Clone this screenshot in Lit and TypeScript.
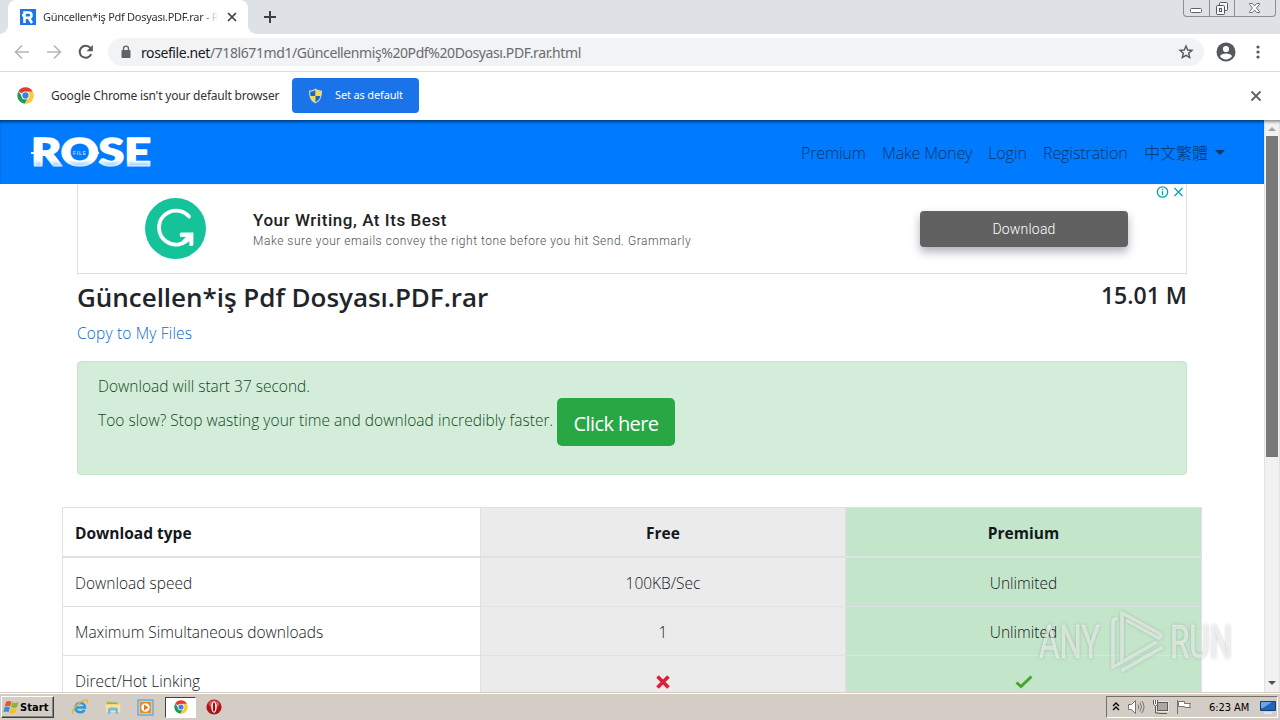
import { LitElement, html, css, svg } from "lit";
import { customElement, property } from "lit/decorators.js";
import { classMap } from "lit/directives/class-map.js";

const chromeLogo = svg`
  <circle cx="24" cy="24" r="22" fill="#fff" />
  <path d="M24 24 4.9 13A22 22 0 0 1 43.1 13z" fill="#e33b2e" />
  <path d="M4.9 13A22 22 0 0 0 22 46l8-13-6-9-9 2z" fill="#219b55" />
  <path d="M43.1 13A22 22 0 0 1 22 46l11-18-5-15z" fill="#fcc934" />
  <circle cx="24" cy="24" r="11" fill="#fff" />
  <circle cx="24" cy="24" r="8.5" fill="#3f7ee8" />
`;

@customElement("browser-top")
class BrowserTop extends LitElement {
  static styles = css`
    :host {
      display: block;
      font-family: "Noto Sans", "DejaVu Sans", sans-serif;
      color: #303236;
      background: #fff;
    }
    svg {
      display: block;
      flex: none;
    }
    .strip {
      display: flex;
      height: 34px;
      background: #dee1e6;
      padding-left: 8px;
      box-sizing: border-box;
    }
    .tab {
      position: relative;
      display: flex;
      align-items: center;
      width: 240px;
      height: 34px;
      padding: 0 11px 0 12px;
      box-sizing: border-box;
      background: #fff;
      border-radius: 8px 8px 0 0;
    }
    .tab::before,
    .tab::after {
      content: "";
      position: absolute;
      bottom: 0;
      width: 8px;
      height: 8px;
    }
    .tab::before {
      left: -8px;
      background: radial-gradient(circle at 0 0, transparent 7.5px, #fff 8px);
    }
    .tab::after {
      right: -8px;
      background: radial-gradient(circle at 100% 0, transparent 7.5px, #fff 8px);
    }
    .title {
      width: 175px;
      margin: 0 9px 1px 7px;
      overflow: hidden;
      white-space: nowrap;
      font-size: 11px;
      letter-spacing: -0.28px;
      mask-image: linear-gradient(90deg, #000 90%, transparent);
    }
    .plus {
      margin: 10px 0 0 15px;
    }
    .controls {
      display: flex;
      margin-left: auto;
      margin-right: 4px;
      height: 16px;
      border: 1px solid #8b8e96;
      border-top: 0;
      border-radius: 0 0 4px 4px;
    }
    .controls svg + svg {
      border-left: 1px solid #8b8e96;
    }
    .toolbar {
      display: flex;
      align-items: center;
      height: 37px;
      box-sizing: border-box;
      padding: 0 13px 1px 14px;
    }
    .toolbar > svg {
      margin-right: 16px;
    }
    .toolbar > .reload {
      margin-right: 14px;
    }
    .address {
      display: flex;
      flex: 1;
      align-items: center;
      height: 28px;
      padding: 0 10px 0 12px;
      border-radius: 14px;
      background: #f1f3f4;
      font-size: 14px;
      color: #696c70;
    }
    .address b {
      font-weight: 400;
      color: #17181a;
    }
    .url {
      flex: 1;
      margin-left: 9px;
      letter-spacing: -0.41px;
      white-space: nowrap;
    }
    .toolbar > .user {
      margin: 0 13px 0 12px;
    }
    .toolbar > .dots {
      margin: 0;
    }
    .infobar {
      display: flex;
      align-items: center;
      height: 49px;
      box-sizing: border-box;
      padding: 0 17px 1px;
      border-top: 1px solid #dadce0;
      font-size: 12px;
    }
    .message {
      margin: 0 13px 0 17px;
      width: 228px;
      white-space: nowrap;
      letter-spacing: -0.19px;
    }
    .set {
      display: flex;
      align-items: center;
      width: 127px;
      height: 35px;
      box-sizing: border-box;
      padding-left: 16px;
      gap: 12px;
      border-radius: 4px;
      background: #1a73e8;
      color: #fff;
      font-size: 11px;
      letter-spacing: -0.15px;
      white-space: nowrap;
    }
    .set span {
      margin-bottom: 2px;
    }
    .close {
      margin-left: auto;
    }
  `;

  render() {
    return html`
      <div class="strip">
        <div class="tab">
          <svg width="16" height="16" viewBox="0 0 16 16">
            <path d="M0 0h16v16H0z" fill="#1a76ee" />
            <path
              d="M4.5 14V3.5h4.3a2.6 2.6 0 0 1 0 5.3H5.5M8.8 9l3.2 5M2 6.2h3"
              fill="none"
              stroke="#fff"
              stroke-width="2.6"
            />
          </svg>
          <div class="title">Güncellen*iş Pdf Dosyası.PDF.rar - R</div>
          <svg width="10" height="10" viewBox="0 0 10 10">
            <path d="M1 1l8 8M9 1L1 9" stroke="#3c4043" stroke-width="1.7" />
          </svg>
        </div>
        <svg class="plus" width="14" height="14" viewBox="0 0 14 14">
          <path d="M7 1v12M1 7h12" stroke="#3c4043" stroke-width="2" />
        </svg>
        <div class="controls">
          <svg width="25" height="16" viewBox="0 0 25 16">
            <rect x="6.5" y="8.5" width="11" height="4" rx="1" fill="#fff" stroke="#5f6269" />
          </svg>
          <svg width="24" height="16" viewBox="0 0 24 16" fill="#f5f6f8" stroke="#555861">
            <rect x="9.5" y="2.5" width="8" height="8" rx="1" />
            <rect x="6.5" y="5.5" width="8" height="9" rx="1" />
            <rect x="9.5" y="8.5" width="2" height="3" />
          </svg>
          <svg width="40" height="16" viewBox="0 0 40 16">
            <path
              d="M14.5 3.5h3l2 2.500 2-2.500h3v1l-3 3.500 3 3.500v1h-3l-2-2.500-2 2.500h-3v-1l3-3.500-3-3.500z"
              fill="#fff"
              stroke="#6a6d74"
            />
          </svg>
        </div>
      </div>

      <div class="toolbar">
        <svg width="16" height="16" viewBox="0 0 16 16" fill="none" stroke="#b5b7ba" stroke-width="1.7">
          <path d="M15 8H2M8 1.500L1.500 8 8 14.500" />
        </svg>
        <svg width="16" height="16" viewBox="0 0 16 16" fill="none" stroke="#b5b7ba" stroke-width="1.7">
          <path d="M1 8h13M8 1.500L14.500 8 8 14.500" />
        </svg>
        <svg class="reload" width="16" height="16" viewBox="0 0 16 16">
          <path d="M13.2 10.200A6 6 0 1 1 12.400 4" fill="none" stroke="#55585c" stroke-width="2" />
          <path d="M14.8 1v6.200H8.600z" fill="#55585c" />
        </svg>
        <div class="address">
          <svg width="12" height="14" viewBox="0 0 12 14">
            <rect x="1.5" y="5" width="9" height="8" rx="1" fill="#5f6368" />
            <path d="M3.5 6V3.700a2.500 2.500 0 0 1 5 0V6" fill="none" stroke="#5f6368" stroke-width="1.3" />
          </svg>
          <div class="url"><b>rosefile.net</b>/718l671md1/Güncellenmiş%20Pdf%20Dosyası.PDF.rar.html</div>
          <svg width="16" height="16" viewBox="0 0 16 16">
            <path
              d="M8 2l1.700 4 4.300.4-3.300 2.900 1 4.200L8 11.300l-3.700 2.200 1-4.200L2 6.400 6.300 6z"
              fill="none"
              stroke="#55585c"
              stroke-width="1.4"
            />
          </svg>
        </div>
        <svg class="user" width="20" height="20" viewBox="0 0 20 20">
          <circle cx="10" cy="10" r="9.5" fill="#55585c" />
          <circle cx="10" cy="7" r="3.1" fill="#fff" />
          <path d="M4 14.300c1.200-3.600 10.800-3.600 12 0a7.300 7.300 0 0 1-12 0z" fill="#fff" />
        </svg>
        <svg class="dots" width="18" height="16" viewBox="0 0 18 16" fill="#55585c">
          <circle cx="9" cy="3" r="1.6" />
          <circle cx="9" cy="8" r="1.6" />
          <circle cx="9" cy="13" r="1.6" />
        </svg>
      </div>

      <div class="infobar">
        <svg width="17" height="17" viewBox="1 1 46 46">${chromeLogo}</svg>
        <div class="message">Google Chrome isn't your default browser</div>
        <div class="set">
          <svg width="15" height="16" viewBox="0 0 15 16">
            <path d="M7.5.5C5.500 2 3.300 2.600 1 2.600 1 8.500 2 13 7.500 15.500 13 13 14 8.500 14 2.600 11.700 2.600 9.500 2 7.500.5z" fill="#d3d5ca" />
            <path d="M7.5 2C6 3 4.200 3.600 2.200 3.800q0 2.300.4 4.200h4.900z" fill="#1767c5" />
            <path d="M7.5 2c1.500 1 3.300 1.600 5.300 1.800q0 2.300-.4 4.200H7.500z" fill="#fbdc35" />
            <path d="M2.6 8h4.900v6.200C4.600 12.700 3.200 10.700 2.600 8z" fill="#fbdc35" />
            <path d="M12.4 8H7.500v6.200c2.900-1.500 4.300-3.500 4.900-6.200z" fill="#1767c5" />
          </svg>
          <span>Set as default</span>
        </div>
        <svg class="close" width="14" height="14" viewBox="0 0 14 14">
          <path d="M2.5 2.500l9 9M11.500 2.500l-9 9" stroke="#5f6368" stroke-width="1.9" />
        </svg>
      </div>
    `;
  }
}

@customElement("rose-nav")
class RoseNav extends LitElement {
  static styles = css`
    :host {
      display: flex;
      align-items: center;
      height: 64px;
      padding: 1px 39px 0 30px;
      box-sizing: border-box;
      background: #007bff;
      box-shadow: inset 0 3px 3px -1px rgba(0, 0, 0, 0.5);
      font-family: "Open Sans", "Noto Sans CJK TC", sans-serif;
    }
    svg {
      display: block;
    }
    nav {
      display: flex;
      align-items: center;
      gap: 16px;
      margin-left: auto;
      font-size: 16px;
      font-weight: 300;
      line-height: 24px;
      color: #043468;
      white-space: nowrap;
    }
    .premium {
      width: 65px;
      letter-spacing: -0.15px;
    }
    .money {
      width: 90px;
      letter-spacing: -0.15px;
    }
    .login {
      width: 39px;
    }
    .registration {
      width: 85px;
      letter-spacing: -0.08px;
    }
    .lang {
      display: flex;
      align-items: center;
      gap: 7px;
    }
    .caret {
      border: 5px solid transparent;
      border-top-color: #043468;
      border-bottom: 0;
    }
  `;

  render() {
    return html`
      <svg width="124" height="34" viewBox="0 0 124 34">
        <defs>
          <linearGradient id="fade" x1="0" y1="0" x2="0" y2="34" gradientUnits="userSpaceOnUse">
            <stop offset="0.7" stop-color="#fff" />
            <stop offset="0.95" stop-color="#fff" stop-opacity="0.45" />
          </linearGradient>
        </defs>
        <text
          x="1"
          y="30"
          textLength="120"
          lengthAdjust="spacingAndGlyphs"
          font-family="Lato"
          font-weight="900"
          font-size="37"
          fill="url(#fade)"
          stroke="url(#fade)"
          stroke-width="1.5"
          stroke-linejoin="round"
        >ROSE</text>
        <path d="M1 17h5M33 17h6M64 17h5M98 17h6" stroke="#fff" stroke-width="2" />
        <text x="43" y="18.5" font-family="Liberation Sans" font-weight="700" font-size="4.5" letter-spacing="1" fill="#cfe6ff">FILE</text>
      </svg>
      <nav>
        <span class="premium">Premium</span>
        <span class="money">Make Money</span>
        <span class="login">Login</span>
        <span class="registration">Registration</span>
        <span class="lang">中文繁體<i class="caret"></i></span>
      </nav>
    `;
  }
}

@customElement("ad-banner")
class AdBanner extends LitElement {
  static styles = css`
    :host {
      position: relative;
      display: flex;
      align-items: center;
      height: 90px;
      padding: 0 58px 1px 67px;
      box-sizing: border-box;
      border: 1px solid #dfdfdf;
      border-top-color: #f2f2f2;
      font-family: Roboto, sans-serif;
    }
    svg {
      display: block;
    }
    .copy {
      margin-left: 47px;
      padding-top: 2px;
      white-space: nowrap;
    }
    .head {
      color: #212121;
      font-size: 17px;
      font-weight: 500;
      line-height: 22px;
      letter-spacing: 0.55px;
    }
    .sub {
      color: #505050;
      font-size: 12px;
      line-height: 20px;
      letter-spacing: 0.53px;
    }
    .button {
      width: 208px;
      height: 36px;
      margin-left: auto;
      margin-top: 1px;
      border-radius: 4px;
      background: #616161;
      box-shadow: 0 5px 10px rgba(40, 30, 60, 0.35);
      color: #fff;
      font-size: 14px;
      line-height: 37px;
      letter-spacing: 0.2px;
      text-align: center;
    }
    .choices {
      position: absolute;
      top: 0;
      right: 1px;
    }
  `;

  render() {
    return html`
      <svg width="61" height="61" viewBox="0 0 61 61">
        <circle cx="30.5" cy="30.5" r="30.5" fill="#15c39a" />
        <path
          d="M44 18.500A17 17 0 1 0 45.500 38.500M36.500 36.500H46.500V46"
          fill="none"
          stroke="#fff"
          stroke-width="3.8"
          stroke-linecap="round"
        />
        <path d="M35 35h13v13h-3.500v-7L39 46l-3-2 5-5.200h-6z" fill="#fff" />
      </svg>
      <div class="copy">
        <div class="head">Your Writing, At Its Best</div>
        <div class="sub">Make sure your emails convey the right tone before you hit Send. Grammarly</div>
      </div>
      <div class="button">Download</div>
      <svg class="choices" width="29" height="14" viewBox="0 0 29 14" fill="none" stroke="#00a5b5" stroke-width="1.3">
        <circle cx="6.5" cy="7" r="5.2" />
        <path d="M6.5 6v4.200M6.500 3.700v1.300M18.500 3l8 8M26.500 3l-8 8" />
      </svg>
    `;
  }
}

interface PlanRow {
  label: string;
  free: string | boolean;
  premium: string | boolean;
}

@customElement("plan-table")
class PlanTable extends LitElement {
  static styles = css`
    :host {
      display: block;
      font-size: 15.5px;
      color: #15181b;
    }
    .row {
      display: grid;
      grid-template-columns: 418px 365px 357px;
      height: 49px;
      border-top: 1px solid #dee2e6;
      box-sizing: border-box;
    }
    .row.head {
      font-size: 15.5px;
      font-weight: 700;
    }
    .row.head + .row {
      height: 50px;
      border-top-width: 2px;
    }
    .cell {
      display: flex;
      align-items: center;
      justify-content: center;
      border-left: 1px solid #dee2e6;
      padding-top: 1px;
    }
    .cell svg {
      margin-top: 3px;
    }
    .label {
      justify-content: flex-start;
      padding-left: 12px;
    }
    .free {
      background: #ebebeb;
    }
    .premium {
      background: #c3e6cb;
      border-right: 1px solid #dee2e6;
    }
  `;

  @property({ attribute: false }) rows: PlanRow[] = [];

  value(v: string | boolean) {
    if (typeof v === "string") return v;
    return v
      ? html`<svg width="18" height="14" viewBox="0 0 18 14">
          <path d="M1.5 7.500l4.500 4L16.500 1.500" fill="none" stroke="#48a32c" stroke-width="3" />
        </svg>`
      : html`<svg width="14" height="14" viewBox="0 0 14 14">
          <path d="M1.5 1.500l11 11M12.500 1.500l-11 11" stroke="#e01e37" stroke-width="3.6" />
        </svg>`;
  }

  render() {
    return this.rows.map(
      (r, i) => html`
        <div class=${classMap({ row: true, head: i === 0 })}>
          <div class="cell label">${r.label}</div>
          <div class="cell free">${this.value(r.free)}</div>
          <div class="cell premium">${this.value(r.premium)}</div>
        </div>
      `
    );
  }
}

@customElement("win-taskbar")
class WinTaskbar extends LitElement {
  static styles = css`
    :host {
      display: flex;
      align-items: center;
      height: 28px;
      padding: 1px 2px 0 1px;
      box-sizing: border-box;
      background: #d4cdc5;
      border-top: 1px solid #d4cdc5;
      box-shadow: inset 0 1px #fff;
      font-family: "DejaVu Sans Condensed", "DejaVu Sans", sans-serif;
      color: #000;
    }
    svg {
      display: block;
      flex: none;
    }
    .start {
      display: flex;
      align-items: center;
      width: 53px;
      height: 22px;
      box-sizing: border-box;
      padding-left: 1px;
      border: 1px solid;
      border-color: #fff #404040 #404040 #fff;
      box-shadow: inset -1px -1px #8a847d;
      font-size: 11px;
      font-weight: 700;
      letter-spacing: 0.1px;
    }
    .launch {
      display: flex;
      align-items: center;
      margin-left: 9px;
    }
    .item {
      display: grid;
      place-items: center;
      width: 33px;
      height: 22px;
    }
    .item.active {
      width: 31px;
      height: 21px;
      box-sizing: border-box;
      border: 1px solid;
      border-color: #404040 #fff #fff #404040;
      background: #fff;
      margin: 0 1px 0 3px;
    }
    .tray {
      display: flex;
      align-items: center;
      width: 172px;
      height: 22px;
      box-sizing: border-box;
      margin-left: auto;
      padding: 0 1px 0 5px;
      border: 1px solid;
      border-color: #77716a #fff #fff #77716a;
    }
    .tray svg {
      margin-right: 7px;
    }
    .clock {
      margin-left: 9px;
      flex: none;
      font-size: 11px;
      letter-spacing: -0.05px;
      white-space: nowrap;
    }
    .tray .desktop {
      margin: 0 0 0 auto;
    }
  `;

  render() {
    return html`
      <div class="start">
        <svg width="17" height="17" viewBox="0 0 17 17">
          <path d="M3 3c2-1.500 3.800-1.300 5.500-.2L7.200 7.500C5.500 6.500 3.600 6.300 1.700 7.500z" fill="#ee5326" />
          <path d="M9.3 3.200c2 1.200 4 1 6.200-.3l-1.300 5c-2 1.300-4 1.300-6.200.2z" fill="#83b935" />
          <path d="M1.5 8.400c1.800-1.200 3.600-1.100 5.400 0l-1.300 4.800C4 12.200 2.200 12.200.3 13.300z" fill="#348fe0" />
          <path d="M7.7 9c2 1.100 4.200 1 6.200-.2l-1.300 4.700c-2 1.300-4.200 1.300-6.200.2z" fill="#f8bd27" />
        </svg>
        Start
      </div>
      <div class="launch">
        <div class="item">
          <svg width="18" height="18" viewBox="0 0 18 18" fill="none">
            <path d="M4.5 9.500h9.500c0-6-9.500-6-9.500 0 0 5.500 7 6 9 2.400" stroke="#279bdb" stroke-width="2.6" />
            <path d="M2 16C-.5 13 8 3 14.500 2c2.500-.3 2.500 1.500 1.500 3" stroke="#e9b62c" stroke-width="1.5" />
          </svg>
        </div>
        <div class="item">
          <svg width="18" height="18" viewBox="0 0 18 18">
            <path d="M2 3h5l1 1.500h7V13H2z" fill="#e8c45c" />
            <path d="M3 4.500h10V6H3z" fill="#72bd62" />
            <path d="M1.5 6.500h15L16 14H2z" fill="#f7e39a" />
            <path d="M4 16v-4.500q0-2 2-2h6q2 0 2 2V16h-2.500v-3.500h-5V16z" fill="#75bde0" />
          </svg>
        </div>
        <div class="item">
          <svg width="17" height="17" viewBox="0 0 17 17">
            <rect x="1" y="1" width="15" height="15" fill="#a8d4ef" stroke="#5198ce" />
            <rect x="3" y="3" width="11" height="11" fill="#f28a1c" />
            <circle cx="8.5" cy="8.5" r="4.2" fill="#fff" />
            <path d="M7 5.500l4.500 3-4.500 3z" fill="#ee7210" />
          </svg>
        </div>
        <div class="item active">
          <svg width="14" height="14" viewBox="1 1 46 46">${chromeLogo}</svg>
        </div>
        <div class="item">
          <svg width="16" height="16" viewBox="0 0 16 16">
            <circle cx="8" cy="8" r="7.6" fill="#b31217" />
            <ellipse cx="8" cy="5" rx="5.5" ry="3.5" fill="#d9565a" />
            <ellipse cx="8" cy="8" rx="2.7" ry="5.8" fill="#fff" />
            <ellipse cx="8" cy="8" rx="1.2" ry="4.8" fill="#9a0d12" />
          </svg>
        </div>
      </div>
      <div class="tray">
        <svg width="8" height="12" viewBox="0 0 8 12" fill="none" stroke="#000" stroke-width="1.4">
          <path d="M1 5l3-3 3 3M1 9l3-3 3 3" />
        </svg>
        <svg width="18" height="16" viewBox="0 0 18 16" fill="none" stroke="#77736e">
          <path d="M1.5 5.500h3l4-4v13l-4-4h-3z" fill="#fff" />
          <path d="M11 5.500q1.500 2.500 0 5M13 3.500q3 4.500 0 9M15 2q4 6 0 12" />
        </svg>
        <svg width="17" height="16" viewBox="0 0 17 16" stroke="#5d5a57">
          <rect x="5.5" y="3.5" width="10" height="8" fill="#b8b6b3" stroke="#fff" stroke-width="2" />
          <rect x="5.5" y="3.5" width="10" height="8" fill="#aaa8a5" />
          <path d="M7 14.500h8M3.500 7v7H7" fill="none" />
          <path d="M1.5 1v4.500q2 3 4 0V1M3.500 1v4" fill="#fff" />
        </svg>
        <svg width="17" height="16" viewBox="0 0 17 16" fill="#fff" stroke="#77736e">
          <path d="M1.5 1v14M2.500 2.500h6v2h6q-2 2 0 4H9q0-1-1-1H2.500z" />
        </svg>
        <span class="clock">6:23 AM</span>
        <svg class="desktop" width="16" height="15" viewBox="0 0 16 15">
          <path d="M.5 1.500h15v9H.5z" fill="#2064b8" stroke="#183d78" />
          <path d="M1 2h11L3 8H1z" fill="#6ca6e7" />
          <path d="M4 12h8v2H4z" fill="#d7e5f4" />
        </svg>
      </div>
    `;
  }
}

@customElement("app-root")
class AppRoot extends LitElement {
  static styles = css`
    :host {
      position: relative;
      display: flex;
      flex-direction: column;
      width: 1280px;
      height: 720px;
      overflow: hidden;
      background: #fff;
      font-family: "Open Sans", "Noto Sans", sans-serif;
    }
    browser-top {
      height: 120px;
      flex: none;
    }
    .view {
      display: flex;
      flex: 1;
      min-height: 0;
    }
    .page {
      flex: 1;
      overflow: hidden;
      color: #212529;
      font-weight: 300;
      white-space: nowrap;
    }
    .container {
      padding: 0 77px;
    }
    .heading {
      display: flex;
      justify-content: space-between;
      height: 49px;
      box-sizing: border-box;
      padding-top: 6px;
      font-weight: 600;
    }
    .name {
      font-size: 26px;
      line-height: 34px;
      letter-spacing: -0.03px;
    }
    .size {
      font-size: 23px;
      line-height: 31px;
    }
    .copy {
      display: block;
      height: 38px;
      line-height: 21px;
      font-size: 15.5px;
      letter-spacing: 0.17px;
      color: #0769c9;
    }
    .alert {
      height: 114px;
      box-sizing: border-box;
      padding: 13px 20px;
      border: 1px solid #c3e6cb;
      border-radius: 4px;
      background: #d4edda;
      color: #0f4a1c;
      font-size: 15.5px;
    }
    .wait {
      line-height: 23px;
    }
    .slow {
      display: flex;
      gap: 4px;
      line-height: 45px;
    }
    .slow span {
      width: 455px;
      letter-spacing: 0.04px;
    }
    .button {
      width: 118px;
      height: 48px;
      border-radius: 5px;
      background: #28a745;
      color: #fff;
      font-size: 20px;
      font-weight: 400;
      letter-spacing: -0.6px;
      line-height: 51px;
      text-align: center;
    }
    plan-table {
      margin: 32px 62px 0;
    }
    .scroll {
      display: flex;
      flex-direction: column;
      align-items: center;
      width: 16px;
      box-sizing: border-box;
      padding: 7px 0 7px;
      background: #f1f1f1;
      box-shadow: inset 0 3px 3px -1px rgba(0, 0, 0, 0.4);
    }
    .up,
    .down {
      border: 4px solid transparent;
    }
    .up {
      border-top: 0;
      border-bottom-color: #a3a3a3;
      margin-bottom: 5px;
    }
    .down {
      border-bottom: 0;
      border-top-color: #505050;
      margin-top: auto;
    }
    .thumb {
      width: 12px;
      height: 321px;
      background: #787878;
    }
    .watermark {
      position: absolute;
      left: 1034px;
      top: 604px;
      filter: drop-shadow(0 0 1.5px rgba(60, 70, 60, 0.5));
    }
  `;

  rows: PlanRow[] = [
    { label: "Download type", free: "Free", premium: "Premium" },
    { label: "Download speed", free: "100KB/Sec", premium: "Unlimited" },
    { label: "Maximum Simultaneous downloads", free: "1", premium: "Unlimited" },
    { label: "Direct/Hot Linking", free: false, premium: true },
  ];

  render() {
    return html`
      <browser-top></browser-top>
      <div class="view">
        <div class="page">
          <rose-nav></rose-nav>
          <div class="container">
            <ad-banner></ad-banner>
            <div class="heading">
              <div class="name">Güncellen*iş Pdf Dosyası.PDF.rar</div>
              <div class="size">15.01 M</div>
            </div>
            <a class="copy">Copy to My Files</a>
            <div class="alert">
              <div class="wait">Download will start 37 second.</div>
              <div class="slow">
                <span>Too slow? Stop wasting your time and download incredibly faster.</span>
                <div class="button">Click here</div>
              </div>
            </div>
          </div>
          <plan-table .rows=${this.rows}></plan-table>
        </div>
        <div class="scroll">
          <i class="up"></i>
          <div class="thumb"></div>
          <i class="down"></i>
        </div>
      </div>
      <win-taskbar></win-taskbar>
      <svg class="watermark" width="210" height="72" viewBox="0 0 210 72">
        <g
          font-family="Roboto"
          font-size="47"
          fill="#fff"
          fill-opacity="0.55"
          stroke="#fff"
          stroke-opacity="0.3"
        >
          <text x="5" y="54" textLength="61" lengthAdjust="spacingAndGlyphs">ANY</text>
          <text x="136" y="54" textLength="62" lengthAdjust="spacingAndGlyphs">RUN</text>
        </g>
        <path
          d="M88 56V9l38 21q2 2-1 4L94 17M82 15q-3 0-3 4v44l42-24M89 66l38-22"
          fill="none"
          stroke="#fff"
          stroke-opacity="0.55"
          stroke-width="3.6"
          stroke-linejoin="round"
          stroke-linecap="round"
        />
      </svg>
    `;
  }
}
